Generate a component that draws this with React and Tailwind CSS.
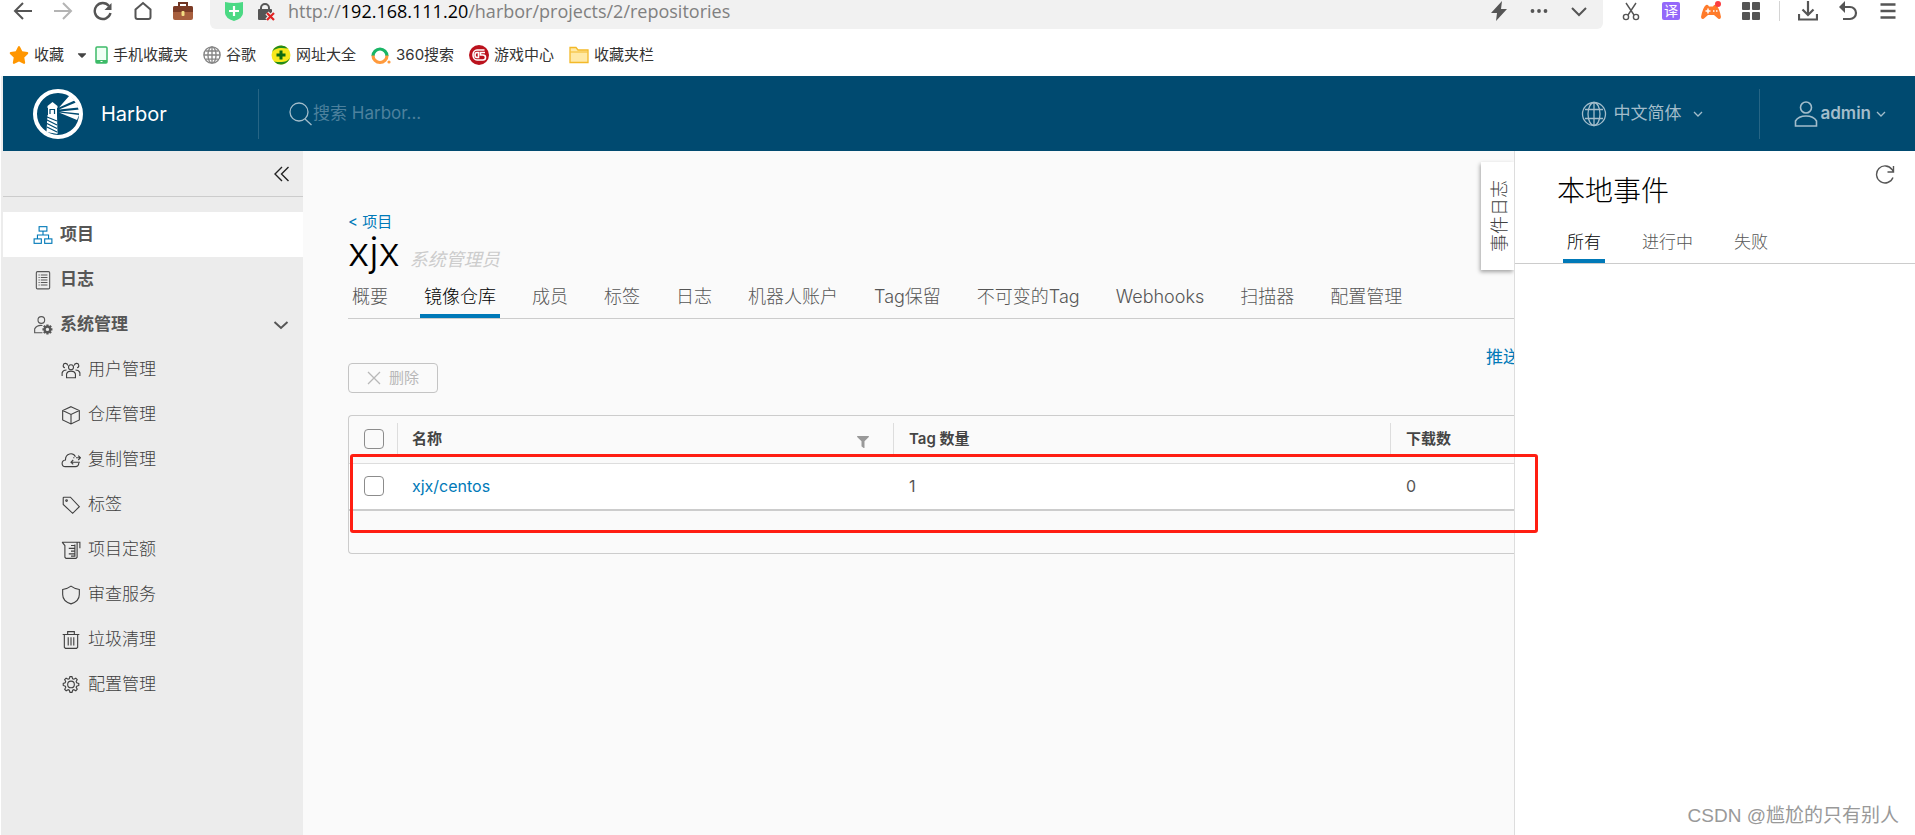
import { FaStar, FaCaretDown, FaFilter } from 'react-icons/fa'

const FONT = "font-['Inter','Noto_Sans_CJK_SC',sans-serif]"

/* Thin outline icon on a 36 unit grid */
function Line({ className = 'size-5', width = 2, children }) {
  return (
    <svg viewBox="0 0 36 36" className={`shrink-0 ${className}`} fill="none" stroke="currentColor" strokeWidth={width} aria-hidden="true">
      {children}
    </svg>
  )
}

/* Browser toolbar icon on a 20 unit grid */
function Tool({ className = 'size-5', width = 2, children }) {
  return (
    <svg viewBox="0 0 20 20" className={`shrink-0 ${className}`} fill="none" stroke="currentColor" strokeWidth={width} aria-hidden="true">
      {children}
    </svg>
  )
}

const GEAR = 'M33 15.2l-3.8-1.2-.9-2.1 1.9-3.6-2.6-2.6-3.5 1.9-2.2-.9L20.7 3h-3.6l-1.2 3.7-2.2.9-3.5-1.9-2.6 2.6 1.8 3.5-.9 2.2L5 15.2v3.6l3.7 1.2.9 2.2-1.9 3.5 2.6 2.6 3.6-1.8 2.1.9 1.2 3.8h3.6l1.2-3.8 2.1-.9 3.6 1.8 2.5-2.6-1.9-3.5.9-2.2 3.9-1.2z'

const icons = {
  project: (
    <Line className="size-5 text-[#0079b8]">
      <rect x="11" y="3" width="14" height="8" />
      <rect x="2" y="25" width="13" height="8" />
      <rect x="21" y="25" width="13" height="8" />
      <path d="M18 11v7M8 25v-7h20v7" />
    </Line>
  ),
  log: (
    <Line>
      <rect x="6" y="3" width="24" height="31" rx="2" />
      <path d="M10 9h2M14 9h12M10 13.500h2M14 13.500h12M10 18h2M14 18h12M10 22.500h2M14 22.500h12M10 27h2M14 27h12" />
    </Line>
  ),
  admin: (
    <Line>
      <circle cx="15" cy="9" r="6" />
      <path d="M17 32H3v-7c3-5 8-7 14-6" />
      <circle cx="26" cy="26" r="5" strokeWidth="4" />
      <path d="M26 17v3M26 32v3M17 26h3M32 26h3M19.500 19.500l2 2M30.500 30.500l2 2M19.500 32.500l2-2M30.500 21.500l2-2" strokeWidth="4" />
    </Line>
  ),
  users: (
    <Line>
      <circle cx="18" cy="13" r="4.500" />
      <path d="M10 32v-7c1-3 4-5 8-5s7 2 8 5v7z" />
      <path d="M12 10a4 4 0 1 0-5 4M24 10a4 4 0 1 1 5 4M10 18c-4 0-7 2-8 5v6M26 18c4 0 7 2 8 5v6" />
    </Line>
  ),
  box: (
    <Line>
      <path d="M18 3l15 7v17l-15 7-15-7V10zM3 10l15 7 15-7M18 17v17" />
    </Line>
  ),
  cloud: (
    <Line>
      <path d="M32 23c0 5-2 7-6 7H8c-8 0-8-11 0-12 0-13 14-14 18-6" />
      <path d="M18 22h16M22 18l-4 4 4 4M22 14h2M27 14h7M31 10l4 4-4 4" />
    </Line>
  ),
  tag: (
    <Line>
      <path d="M4 5v12l17 16 12-12L17 4H5z" />
      <circle cx="10" cy="10" r="1.500" />
    </Line>
  ),
  quota: (
    <Line>
      <path d="M2 4h32v11M2 4l5 6v21l2 2h18l2-2V4" />
      <path d="M18 10h7M14 15h11M18 20h7M14 25h11M18 29h7M25 8v22" />
    </Line>
  ),
  shield: (
    <Line>
      <path d="M18 2c5 4 9 5 15 6v9c0 8-6 14-15 17C9 31 3 25 3 17V8c6-1 10-2 15-6z" />
    </Line>
  ),
  trash: (
    <Line>
      <path d="M3 8h30M12 8V3h12v5M6 8v23l2 2h20l2-2V8M13 13v15M18 13v15M23 13v15" />
    </Line>
  ),
  gear: (
    <Line>
      <path d={GEAR} transform="translate(-1)" />
      <circle cx="18" cy="17" r="6" />
    </Line>
  ),
}

const SUB_ITEMS = [
  { label: '用户管理', icon: 'users' },
  { label: '仓库管理', icon: 'box' },
  { label: '复制管理', icon: 'cloud' },
  { label: '标签', icon: 'tag' },
  { label: '项目定额', icon: 'quota' },
  { label: '审查服务', icon: 'shield' },
  { label: '垃圾清理', icon: 'trash' },
  { label: '配置管理', icon: 'gear' },
]

const TABS = ['概要', '镜像仓库', '成员', '标签', '日志', '机器人账户', 'Tag保留', '不可变的Tag', 'Webhooks', '扫描器', '配置管理']

const EVENT_TABS = ['所有', '进行中', '失败']

const REPOSITORIES = [{ name: 'xjx/centos', tags: 1, pulls: 0 }]

const BOOKMARKS = [
  {
    label: '手机收藏夹',
    icon: (
      <svg viewBox="0 0 13 18" className="h-[18px] w-[13px]" aria-hidden="true">
        <rect x="1" y="1" width="11" height="16" rx="1" fill="#f0fff4" stroke="#3dbb68" strokeWidth="1.500" />
        <path d="M1 14h11v3H1z" fill="#3dbb68" />
        <path d="M5.500 15.500h2" stroke="#fff" />
      </svg>
    ),
  },
  {
    label: '谷歌',
    icon: (
      <Tool className="size-[18px] text-[#858585]" width={1.5}>
        <circle cx="10" cy="10" r="9" />
        <ellipse cx="10" cy="10" rx="4.500" ry="9" />
        <path d="M10 1v18M1 10h18M3 5.500h14M3 14.500h14" />
      </Tool>
    ),
  },
  {
    label: '网址大全',
    icon: (
      <svg viewBox="0 0 20 20" className="size-5" aria-hidden="true">
        <circle cx="10" cy="10" r="9.500" fill="#f7e81c" />
        <path d="M17 3.500A9.500 9.500 0 0 0 1 7.500C3 3.500 8 2 17 3.500zM3 16.500A9.500 9.500 0 0 0 19 12.500C17 16.500 12 18 3 16.500z" fill="#228b1e" />
        <path d="M10 5.500v9M5.500 10h9" stroke="#0f6a10" strokeWidth="3" />
      </svg>
    ),
  },
  {
    label: '360搜索',
    icon: (
      <svg viewBox="0 0 20 20" className="size-5" fill="none" strokeWidth="3.200" aria-hidden="true">
        <path d="M2 11a7 7 0 1 1 14 0" stroke="#19b566" />
        <path d="M2 10.500a7 7 0 0 0 14 0" stroke="#ff9a3c" />
        <circle cx="18" cy="17" r="1.600" fill="#ff9a3c" />
      </svg>
    ),
  },
  {
    label: '游戏中心',
    icon: (
      <svg viewBox="0 0 20 20" className="size-5" fill="none" stroke="#fff" strokeWidth="1.600" aria-hidden="true">
        <circle cx="10" cy="10" r="10" fill="#bb121d" stroke="none" />
        <path d="M15.500 5H8a4 5 0 0 0 0 10h6a2.200 2.200 0 0 0 0-5h-2.500V7.500H16M9.500 7.500v5H8a2 2.500 0 0 1 0-5z" />
      </svg>
    ),
  },
  {
    label: '收藏夹栏',
    icon: (
      <svg viewBox="0 0 20 18" className="h-[18px] w-5" aria-hidden="true">
        <path d="M1 16.500V1.500h6l2 2.500h10v12.500z" fill="#ffe9a6" stroke="#f3b928" strokeWidth="1.300" />
        <path d="M1.500 6h17" stroke="#f3b928" />
      </svg>
    ),
  },
]

function ToolButton({ label, children }) {
  return (
    <button type="button" aria-label={label} className="flex size-5 items-center justify-center">
      {children}
    </button>
  )
}

function BrowserBar() {
  return (
    <div className="h-[75px] bg-white text-[#555]">
      <div className="flex h-[29px]">
        <div className="flex h-[22px] w-[210px] shrink-0 items-center gap-5 pl-[13px]">
          <ToolButton label="后退">
            <Tool><path d="M19 10H2.500M10 2l-8 8 8 8" /></Tool>
          </ToolButton>
          <ToolButton label="前进">
            <Tool className="size-5 text-[#b4b4b4]"><path d="M1 10h16.500M10 2l8 8-8 8" /></Tool>
          </ToolButton>
          <ToolButton label="刷新">
            <Tool width={2.4}>
              <path d="M17.500 12a8 8 0 1 1-1.500-7" />
              <path d="M18.500 2v7h-7z" fill="currentColor" stroke="none" />
            </Tool>
          </ToolButton>
          <ToolButton label="主页">
            <Tool><path d="M2.500 8.500L10 2l7.500 6.500V16q0 2-2 2h-11q-2 0-2-2z" /></Tool>
          </ToolButton>
          <ToolButton label="工具箱">
            <svg viewBox="0 0 20 20" className="size-5" aria-hidden="true">
              <path d="M6 5V2h8v3" fill="none" stroke="#6f3423" strokeWidth="2" />
              <rect y="5" width="20" height="14" rx="2" fill="#a85f3e" />
              <path d="M0 11V7q0-2 2-2h16q2 0 2 2v4z" fill="#7b3b26" />
              <rect x="8.500" y="10" width="3" height="5" rx="1" fill="#f3dc82" />
            </svg>
          </ToolButton>
        </div>

        <div className="h-[29px] min-w-0 flex-1 rounded-b-md bg-[#f1f1f1]">
          <div className="flex h-[22px] items-center pl-[14px] pr-[14px]">
            <svg viewBox="0 0 20 20" className="mr-[13px] size-5" aria-hidden="true">
              <path d="M1 1q9 2 18 0v11q0 5-9 8-9-3-9-8z" fill="#4bd984" />
              <path d="M10 5v10M5 10h10" stroke="#fff" strokeWidth="2.200" />
            </svg>
            <svg viewBox="0 0 20 20" className="mr-[11px] size-5" fill="none" aria-hidden="true">
              <path d="M4 9V7a4 4 0 0 1 8 0v2" stroke="#555" strokeWidth="2" />
              <rect x="1" y="8" width="14" height="11" rx="1" fill="#555" />
              <path d="M10 12l7 7M17 12l-7 7" stroke="#f1f1f1" strokeWidth="4.500" />
              <path d="M10 12l7 7M17 12l-7 7" stroke="#e02323" strokeWidth="2.200" />
            </svg>
            <span className="flex-1 whitespace-nowrap font-['Open_Sans',sans-serif] text-[18px] leading-5 text-[#808080]">
              http://<span className="text-black">192.168.111.20</span>/harbor/projects/2/repositories
            </span>
            <div className="flex gap-5">
              <ToolButton label="加速">
                <Tool><path d="M13 0L2 12h6l-1 8L18 8h-6z" fill="currentColor" stroke="none" /></Tool>
              </ToolButton>
              <ToolButton label="更多">
                <Tool>
                  <g fill="currentColor" stroke="none">
                    <circle cx="3.500" cy="10" r="1.900" />
                    <circle cx="10" cy="10" r="1.900" />
                    <circle cx="16.500" cy="10" r="1.900" />
                  </g>
                </Tool>
              </ToolButton>
              <ToolButton label="展开">
                <Tool><path d="M3 7l7 7 7-7" /></Tool>
              </ToolButton>
            </div>
          </div>
        </div>

        <div className="flex h-[22px] shrink-0 items-center gap-5 pl-[18px] pr-[17px]">
          <ToolButton label="截图">
            <Tool width={1.4}>
              <path d="M5 2l8 12M15 2L7 14" />
              <circle cx="5" cy="16" r="2.600" />
              <circle cx="15" cy="16" r="2.600" />
            </Tool>
          </ToolButton>
          <button type="button" className="mx-px size-[18px] rounded-xs bg-[#9468fa] text-[14px] leading-[18px] text-white">译</button>
          <ToolButton label="游戏">
            <svg viewBox="0 0 20 20" className="size-5" aria-hidden="true">
              <path d="M5 4q2-1 3 1.500h4Q13 3 15 4q3 2 5 12-.5 3-3 1.500L13 14H7l-4 3.500Q.5 19 0 16 2 6 5 4z" fill="#ff7b2b" />
              <path d="M7 7.500v5M4.500 10h5M12 10h1.500M15 10h1.500" stroke="#fff" strokeWidth="1.500" />
              <circle cx="17" cy="3" r="3" fill="#fb3d41" />
            </svg>
          </ToolButton>
          <ToolButton label="应用">
            <Tool>
              <g fill="currentColor" stroke="none">
                <rect x="1" y="1" width="8" height="8" rx="1" />
                <rect x="11" y="1" width="8" height="8" rx="1" />
                <rect x="1" y="11" width="8" height="8" rx="1" />
                <rect x="11" y="11" width="8" height="8" rx="1" />
              </g>
            </Tool>
          </ToolButton>
          <span className="-mx-0.5 h-5 w-px bg-[#d4d4d4]" />
          <ToolButton label="下载">
            <Tool width={2.2}><path d="M10 0v14M4.500 8.500L10 14l5.500-5.500M1 13v5.500h18V13" /></Tool>
          </ToolButton>
          <ToolButton label="恢复">
            <Tool width={2.2}>
              <path d="M3 6h9a6 6 0 0 1 0 12H5" />
              <path d="M7 0v12L1 6z" fill="currentColor" stroke="none" />
            </Tool>
          </ToolButton>
          <ToolButton label="菜单">
            <Tool width={2.4}><path d="M2.500 3.500h15M2.500 10h15M2.500 16.500h15" /></Tool>
          </ToolButton>
        </div>
      </div>

      <nav className="flex h-[52px] items-center whitespace-nowrap pl-[9px] text-[15px] text-[#333]">
        <a href="#fav" className="flex items-center gap-[5px]">
          <FaStar className="size-5 text-[#ff9600]" />
          收藏
        </a>
        <FaCaretDown className="ml-[11px] mr-[6px] size-3.5 text-[#444]" />
        <div className="flex items-center gap-[15px]">
          {BOOKMARKS.map((b) => (
            <a key={b.label} href="#bookmark" className="flex items-center gap-[5px]">
              {b.icon}
              {b.label}
            </a>
          ))}
        </div>
      </nav>
    </div>
  )
}

function Logo() {
  return (
    <svg viewBox="0 0 50 50" className="size-[50px]" aria-hidden="true">
      <circle cx="25" cy="25" r="23" fill="none" stroke="#fff" strokeWidth="4" />
      <g fill="#fff">
        <path d="M19.500 13l5 4v2h-10v-2z" />
        <path d="M15 19h9v7h-9z" />
        <path d="M14.500 26h9.500l.5 19-11-2z" />
        <path d="M26 18.500L36.500 6.500l5 5zM26 20.500l17-7 2.500 5zM27 22.500l20-2v4zM26 23.500l20 2.500-2 5z" />
      </g>
      <g stroke="#004a70" strokeWidth="1.200" fill="none">
        <path d="M17 25v-4.500h4.500V25M14 28l10 4M14 31l10 5M14 34.500l10 5M14 38l10 5" />
      </g>
    </svg>
  )
}

function Caret() {
  return (
    <svg viewBox="0 0 10 10" className="size-2.5" fill="none" stroke="currentColor" strokeWidth="1.300" aria-hidden="true">
      <path d="M1 3l4 4 4-4" />
    </svg>
  )
}

function Header() {
  return (
    <header className="flex h-[75px] items-center bg-[#004a70] text-[#a3bdcb]">
      <a href="#home" className="flex w-[255px] items-center gap-[18px] pl-[30px] text-[20px] text-white">
        <Logo />
        Harbor
      </a>
      <div className="flex h-[50px] flex-1 items-center border-l border-white/15 pl-[30px]">
        <svg viewBox="0 0 24 24" className="size-6" fill="none" stroke="currentColor" strokeWidth="1.300" aria-hidden="true">
          <circle cx="10" cy="10" r="9" />
          <path d="M16 17l6.500 6" />
        </svg>
        <input
          type="text"
          aria-label="搜索"
          placeholder="搜索 Harbor..."
          className="w-[260px] bg-transparent text-[17px] outline-none placeholder:text-[#4d819d]"
        />
      </div>
      <button type="button" className="mr-[56px] flex items-center text-[17px]">
        <svg viewBox="0 0 26 26" className="mr-[6px] size-[26px]" fill="none" stroke="currentColor" strokeWidth="1.300" aria-hidden="true">
          <circle cx="13" cy="13" r="11.500" />
          <ellipse cx="13" cy="13" rx="6" ry="11.500" />
          <path d="M13 1.500v23M4 8.500h18M4 17.500h18" />
        </svg>
        中文简体
        <span className="ml-3"><Caret /></span>
      </button>
      <div className="flex h-[50px] items-center border-l border-white/15 pl-[33px] pr-[29px]">
        <button type="button" className="flex items-center text-[17px] font-semibold">
          <svg viewBox="0 0 26 28" className="mr-px h-7 w-[26px]" fill="none" stroke="currentColor" strokeWidth="1.600" aria-hidden="true">
            <circle cx="13" cy="7.500" r="5.500" />
            <path d="M2.500 26v-5q3-5 10.500-5t10.500 5v5z" />
          </svg>
          admin
          <span className="ml-[5px]"><Caret /></span>
        </button>
      </div>
    </header>
  )
}

function Sidebar() {
  return (
    <nav className="w-[300px] shrink-0 bg-[#ececec] text-[17px] text-[#565656]">
      <div className="flex h-[46px] items-center justify-end border-b border-[#ccc] pr-[11px]">
        <button type="button" aria-label="收起" className="text-[#222]">
          <Tool width={1.4}><path d="M10 3L3 10l7 7M16.500 3l-7 7 7 7" /></Tool>
        </button>
      </div>
      <div className="pt-[15px] font-bold">
        <a href="#projects" className="flex h-[45px] items-center gap-[7px] bg-white pl-[30px]">
          {icons.project}
          项目
        </a>
        <a href="#logs" className="flex h-[45px] items-center gap-[7px] pl-[30px]">
          {icons.log}
          日志
        </a>
        <button type="button" className="flex h-[45px] w-full items-center gap-[7px] pl-[30px] pr-3">
          {icons.admin}
          系统管理
          <Tool className="ml-auto size-5"><path d="M3.500 7l6.500 6 6.500-6" /></Tool>
        </button>
      </div>
      {SUB_ITEMS.map((item) => (
        <a key={item.label} href={`#${item.icon}`} className="flex h-[45px] items-center gap-[7px] pl-[58px] font-light text-[#404040]">
          {icons[item.icon]}
          {item.label}
        </a>
      ))}
    </nav>
  )
}

function Tab({ active, children }) {
  return (
    <button
      type="button"
      role="tab"
      aria-selected={active}
      className={`h-full shrink-0 border-b-4 px-1 ${active ? 'border-[#0079b8] text-black' : 'border-transparent text-[#565656]'}`}
    >
      {children}
    </button>
  )
}

function Check({ label }) {
  return (
    <input
      type="checkbox"
      aria-label={label}
      className="block size-5 appearance-none rounded-[4px] border border-[#8c8c8c] bg-transparent"
    />
  )
}

function RepositoryTable() {
  return (
    <div className="h-[139px] rounded-l-[4px] border border-r-0 border-[#ccc]">
      <table className="w-full table-fixed border-collapse text-left text-[15px] text-[#565656]">
        <colgroup>
          <col className="w-12" />
          <col className="w-[496px]" />
          <col className="w-[497px]" />
          <col />
        </colgroup>
        <thead>
          <tr className="h-[47px] border-b border-[#ddd]">
            <th className="pl-[15px]"><Check label="全选" /></th>
            <th className="font-semibold">
              <div className="flex h-8 items-center justify-between border-l border-[#ddd] pl-[14px] pr-6 text-[#454545]">
                名称
                <button type="button" aria-label="过滤" className="pt-1.5"><FaFilter className="size-3 text-[#999]" /></button>
              </div>
            </th>
            <th className="font-semibold">
              <div className="flex h-8 items-center border-l border-[#ddd] pl-[15px] text-[#454545]">Tag 数量</div>
            </th>
            <th className="font-semibold">
              <div className="flex h-8 items-center border-l border-[#ddd] pl-[15px] text-[#454545]">下载数</div>
            </th>
          </tr>
        </thead>
        <tbody>
          {REPOSITORIES.map((repo) => (
            <tr key={repo.name} className="h-[47px] border-b-2 border-[#ccc] bg-white text-[16px]">
              <td className="pl-[15px]"><Check label={repo.name} /></td>
              <td className="pl-[15px]"><a href="#repo" className="text-[#0079b8]">{repo.name}</a></td>
              <td className="pl-4">{repo.tags}</td>
              <td className="pl-4">{repo.pulls}</td>
            </tr>
          ))}
        </tbody>
      </table>
    </div>
  )
}

function ProjectPage() {
  return (
    <main className="relative min-w-0 flex-1 overflow-hidden bg-[#fafafa] pl-[45px] pt-[61px]">
      <a href="#projects" className="block text-[15px] leading-5 text-[#0079b8]">&lt; 项目</a>
      <div className="mb-[7px] flex items-baseline gap-[10px]">
        <h1 className="text-[40px] font-light leading-10 text-black">xjx</h1>
        <span className="text-[18px] italic leading-6 text-[#ccc]">系统管理员</span>
      </div>
      <div role="tablist" className="flex h-[40px] gap-7 whitespace-nowrap border-b border-[#ccc] text-[18px] font-light">
        {TABS.map((t) => <Tab key={t} active={t === '镜像仓库'}>{t}</Tab>)}
      </div>

      <div className="mt-[27px] flex justify-end">
        <button type="button" className="w-7 whitespace-nowrap text-left text-[17px] leading-[22px] text-[#0079b8]">推送镜像</button>
      </div>
      <div className="-mt-[5px] mb-[22px]">
        <button type="button" disabled className="flex h-[30px] w-[90px] items-center gap-2 rounded-[4px] border border-[#c4c4c4] pl-[18px] text-[15px] text-[#b8b8b8]">
          <svg viewBox="0 0 14 14" className="size-3.5" fill="none" stroke="currentColor" strokeWidth="1.300" aria-hidden="true">
            <path d="M1 1l12 12M13 1L1 13" />
          </svg>
          删除
        </button>
      </div>
      <RepositoryTable />

      <button
        type="button"
        className="absolute right-0 top-[11px] flex h-[108px] w-[33px] items-center justify-center bg-white pl-1 text-[18px] font-light text-[#404040] shadow-[-1px_2px_4px_rgba(0,0,0,0.35)]"
      >
        <span className="rotate-180 leading-6 [text-orientation:sideways] [writing-mode:vertical-rl]">事件日志</span>
      </button>
    </main>
  )
}

function EventPanel() {
  return (
    <aside className="relative w-[401px] shrink-0 border-l border-[#ddd] bg-white">
      <div className="flex h-[75px] justify-between pl-[42px] pr-5 pt-[14px]">
        <h2 className="pt-[6px] text-[28px] font-light leading-10 text-black">本地事件</h2>
        <button type="button" aria-label="刷新事件" className="h-5 text-[#565656]">
          <Tool className="size-5" width={1.4}>
            <path d="M18 12.500a8.500 8.500 0 1 1-1-8l1.500 2.500M18.500 1v6h-6" />
          </Tool>
        </button>
      </div>
      <div role="tablist" className="flex h-[38px] gap-[33px] border-b border-[#ccc] pl-12 text-[17px] font-light">
        {EVENT_TABS.map((t) => <Tab key={t} active={t === '所有'}>{t}</Tab>)}
      </div>
      <p className="absolute bottom-[7px] right-4 whitespace-nowrap font-['Liberation_Sans','Noto_Sans_CJK_SC',sans-serif] text-[19px] leading-6 text-[#999]">
        CSDN @尴尬的只有别人
      </p>
    </aside>
  )
}

export default function App() {
  return (
    <div className={`flex min-h-screen flex-col bg-white ${FONT}`}>
      <BrowserBar />
      <div className="ml-px mt-px flex flex-1 flex-col border-l-2 border-[#ececec]">
        <Header />
        <div className="relative flex flex-1">
          <Sidebar />
          <ProjectPage />
          <EventPanel />
          {/* Marked area around the pushed image */}
          <div className="pointer-events-none absolute left-[347px] right-[377px] top-[303px] h-[79px] rounded-[3px] border-3 border-[#ff1e12]" />
        </div>
      </div>
    </div>
  )
}
